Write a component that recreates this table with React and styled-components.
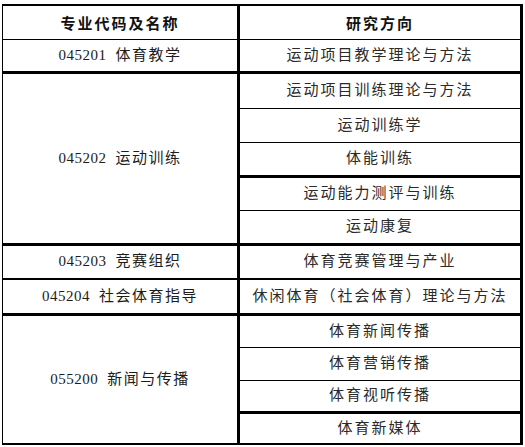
import styled, { createGlobalStyle } from 'styled-components';

const GlobalStyle = createGlobalStyle`
  html, body {
    margin: 0;
    padding: 0;
    background: #ffffff;
  }
  body {
    padding: 4px 2px 0 2px;
    font-family: "Liberation Serif", "Noto Sans CJK SC", serif;
    color: #1c1c1c;
  }
`;

const programs = [
  { code: '045201', name: '体育教学', top: 1, rows: [{ t: '运动项目教学理论与方法', h: 33 }] },
  {
    code: '045202',
    name: '运动训练',
    top: 3,
    rows: [
      { t: '运动项目训练理论与方法', h: 36 },
      { t: '运动训练学', h: 34, b: 1 },
      { t: '体能训练', h: 34, b: 1 },
      { t: '运动能力测评与训练', h: 34, b: 3 },
      { t: '运动康复', h: 34, b: 1 },
    ],
  },
  { code: '045203', name: '竞赛组织', top: 3, rows: [{ t: '体育竞赛管理与产业', h: 35 }] },
  { code: '045204', name: '社会体育指导', top: 2, rows: [{ t: '休闲体育（社会体育）理论与方法', h: 35 }] },
  {
    code: '055200',
    name: '新闻与传播',
    top: 3,
    rows: [
      { t: '体育新闻传播', h: 33 },
      { t: '体育营销传播', h: 33, b: 1 },
      { t: '体育视听传播', h: 32, b: 1 },
      { t: '体育新媒体', h: 32, b: 3 },
    ],
  },
];

export default function App() {
  return (
    <>
      <GlobalStyle />
      <Table>
        <colgroup>
          <col style={{ width: 236 }} />
          <col />
        </colgroup>
        <tbody>
          <Row $h={34}>
            <HeadCell $top={2}>专业代码及名称</HeadCell>
            <HeadCell $top={2} $right>研究方向</HeadCell>
          </Row>
          {programs.map((p) =>
            p.rows.map((r, i) => (
              <Row key={p.code + i} $h={r.h}>
                {i === 0 && (
                  <NameCell rowSpan={p.rows.length} $top={p.top}>
                    <Code>{p.code}</Code>
                    {p.name}
                  </NameCell>
                )}
                <DirCell $top={i === 0 ? p.top : r.b}>{r.t}</DirCell>
              </Row>
            ))
          )}
        </tbody>
      </Table>
    </>
  );
}

const Table = styled.table`
  width: 521px;
  border-collapse: collapse;
  table-layout: fixed;
  border-left: 1px solid #000;
  border-right: 3px solid #000;
  border-bottom: 2px solid #000;
`;

const Row = styled.tr`
  height: ${(p) => p.$h}px;
`;

const Cell = styled.td`
  padding: 0;
  text-align: center;
  vertical-align: middle;
  border-top: ${(p) => p.$top || 1}px solid #000;
  font-size: 15px;
  line-height: 1;
  white-space: nowrap;
`;

const HeadCell = styled(Cell)`
  font-family: "Noto Sans CJK SC", sans-serif;
  font-weight: 700;
  letter-spacing: 2px;
  border-right: ${(p) => (p.$right ? 0 : 3)}px solid #000;
  color: #111;
`;

const NameCell = styled(Cell)`
  border-right: 3px solid #000;
  letter-spacing: 1.5px;
`;

const Code = styled.span`
  letter-spacing: 0.5px;
  margin-right: 9px;
`;

const DirCell = styled(Cell)`
  letter-spacing: 2px;
  color: #2a2a2a;
`;
